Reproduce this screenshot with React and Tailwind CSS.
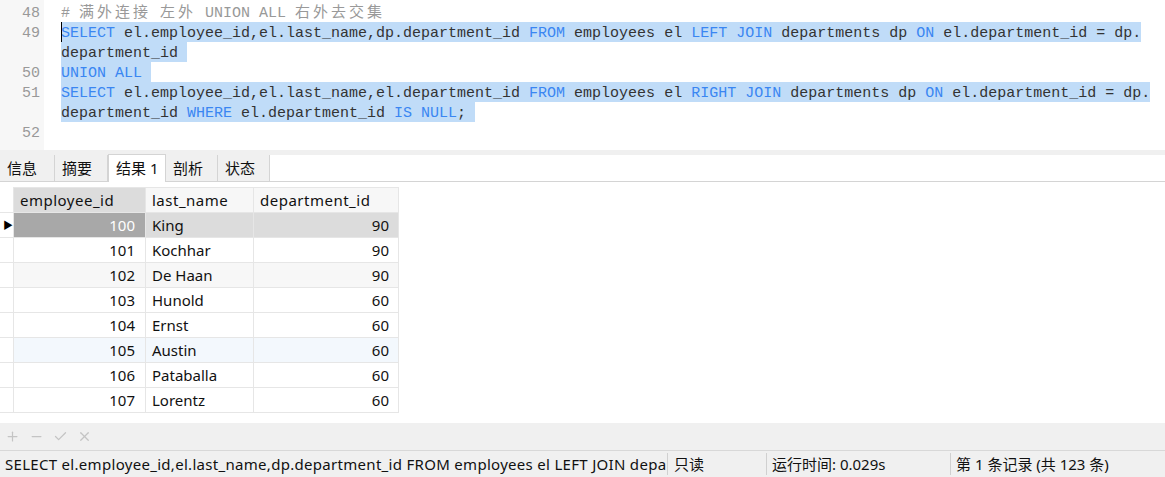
import { Plus, Minus, Check, X } from "lucide-react";

const mono = { fontFamily: '"Liberation Mono", "Noto Sans CJK SC", monospace' };
const ui = { fontFamily: '"Noto Sans", "Noto Sans CJK SC", sans-serif' };

// each visual (wrapped) line of the editor
const editorLines = [
  {
    no: "48",
    parts: [
      { t: "# ", c: "cm" },
      { t: "满外连接", c: "cj" },
      { t: " ", c: "cm" },
      { t: "左外", c: "cj" },
      { t: " UNION ALL ", c: "cm" },
      { t: "右外去交集", c: "cj" },
    ],
  },
  {
    no: "49",
    cursor: true,
    parts: [
      { t: "SELECT", c: "kw" },
      { t: " el.employee_id,el.last_name,dp.department_id " },
      { t: "FROM", c: "kw" },
      { t: " employees el " },
      { t: "LEFT JOIN", c: "kw" },
      { t: " departments dp " },
      { t: "ON", c: "kw" },
      { t: " el.department_id = dp." },
    ],
    sel: true,
  },
  { no: "", parts: [{ t: "department_id " }], sel: true },
  { no: "50", parts: [{ t: "UNION ALL", c: "kw" }, { t: " " }], sel: true },
  {
    no: "51",
    parts: [
      { t: "SELECT", c: "kw" },
      { t: " el.employee_id,el.last_name,el.department_id " },
      { t: "FROM", c: "kw" },
      { t: " employees el " },
      { t: "RIGHT JOIN", c: "kw" },
      { t: " departments dp " },
      { t: "ON", c: "kw" },
      { t: " el.department_id = dp." },
    ],
    sel: true,
  },
  {
    no: "",
    parts: [
      { t: "department_id " },
      { t: "WHERE", c: "kw" },
      { t: " el.department_id " },
      { t: "IS NULL", c: "kw" },
      { t: "; " },
    ],
    sel: true,
  },
  { no: "52", parts: [] },
];

const rows = [
  ["100", "King", "90"],
  ["101", "Kochhar", "90"],
  ["102", "De Haan", "90"],
  ["103", "Hunold", "60"],
  ["104", "Ernst", "60"],
  ["105", "Austin", "60"],
  ["106", "Pataballa", "60"],
  ["107", "Lorentz", "60"],
];

const tabs = ["信息", "摘要", "结果 1", "剖析", "状态"];

function partClass(c) {
  if (c === "kw") return "text-[#3a86f2]";
  if (c === "cm") return "text-[#999]";
  if (c === "cj") return "text-[#999] tracking-[3px]";
  return "";
}

function Editor() {
  return (
    <div className="flex h-[150px] bg-white">
      <div className="w-[44px] bg-[#f7f7f7] pt-[4px]">
        {editorLines.map((l, i) => (
          <div
            key={i}
            className="h-[20px] pr-[4px] text-right text-[15px] leading-[20px] text-[#999]"
            style={mono}
          >
            {l.no}
          </div>
        ))}
      </div>
      <div className="flex-1 pl-[17px] pt-[2px]">
        {editorLines.map((l, i) => (
          <div key={i} className="flex h-[20px] whitespace-pre text-[15px] text-[#333]" style={mono}>
            <span className={`relative leading-[24px] ${l.sel ? "bg-[#c0dcf8]" : ""}`}>
              {l.cursor && (
                <span className="absolute left-0 top-0 h-[20px] w-px bg-black" />
              )}
              {l.parts.map((p, j) => (
                <span key={j} className={partClass(p.c)}>
                  {p.t}
                </span>
              ))}
            </span>
          </div>
        ))}
      </div>
    </div>
  );
}

function Tabs() {
  return (
    <div className="border-t-[5px] border-[#f0f0f0]">
      <div className="flex h-[27px] items-end border-b border-[#d4d4d4] bg-white">
        {tabs.map((t, i) =>
          i === 2 ? (
            <div
              key={t}
              className="-mb-px flex h-[28px] w-[58px] items-center border-x border-t border-[#d4d4d4] bg-white pl-[7px] text-[15px] text-[#111]"
              style={ui}
            >
              {t}
            </div>
          ) : (
            <div
              key={t}
              className={`flex h-[26px] items-center border-r border-[#d4d4d4] bg-[#f0f0f0] pl-[7px] text-[15px] text-[#111] ${
                i === 0 ? "w-[55px]" : i === 1 ? "w-[53px]" : "w-[52px]"
              }`}
              style={ui}
            >
              {t}
            </div>
          )
        )}
      </div>
    </div>
  );
}

function ResultTable() {
  const rowBg = (i) =>
    i === 2 ? "bg-[#f7f7f7]" : i === 5 ? "bg-[#f3f8fd]" : "bg-white";
  return (
    <div className="h-[241px] bg-white pt-[5px]">
      <table className="table-fixed border-collapse text-[15px] text-[#111]" style={ui}>
        <colgroup>
          <col className="w-[13px]" />
          <col className="w-[132px]" />
          <col className="w-[108px]" />
          <col className="w-[145px]" />
        </colgroup>
        <thead>
          <tr className="h-[25px]">
            <th className="border-r border-[#e6e6e6]" />
            <th className="border border-[#e6e6e6] bg-[#dcdcdc] px-[6px] text-left font-normal tracking-[0.5px]">
              employee_id
            </th>
            <th className="border border-[#e6e6e6] bg-[#f7f7f7] px-[6px] text-left font-normal tracking-[0.5px]">
              last_name
            </th>
            <th className="border border-[#e6e6e6] bg-[#f7f7f7] px-[6px] text-left font-normal tracking-[0.5px]">
              department_id
            </th>
          </tr>
        </thead>
        <tbody>
          {rows.map((r, i) => (
            <tr key={r[0]} className="h-[25px]">
              <td className="border-y border-r border-[#e6e6e6] bg-white p-0 text-[10px] leading-none text-black">
                {i === 0 && <span className="pl-[3px]">▶</span>}
              </td>
              <td
                className={`border border-[#e6e6e6] px-[10px] text-right ${
                  i === 0 ? "bg-[#a8a8a8] text-white" : rowBg(i)
                }`}
              >
                {r[0]}
              </td>
              <td
                className={`border border-[#e6e6e6] px-[6px] ${
                  i === 0 ? "bg-[#dcdcdc]" : rowBg(i)
                }`}
              >
                {r[1]}
              </td>
              <td
                className={`border border-[#e6e6e6] px-[9px] text-right ${
                  i === 0 ? "bg-[#dcdcdc]" : rowBg(i)
                }`}
              >
                {r[2]}
              </td>
            </tr>
          ))}
        </tbody>
      </table>
    </div>
  );
}

function Toolbar() {
  return (
    <div className="flex h-[28px] items-center gap-[9px] border-b border-[#d8d8d8] bg-[#f0f0f0] pl-[5px] text-[#c4c4c4]">
      <Plus size={15} strokeWidth={2} />
      <Minus size={15} strokeWidth={2} />
      <Check size={15} strokeWidth={2} />
      <X size={15} strokeWidth={2} />
    </div>
  );
}

function StatusBar() {
  return (
    <div className="flex h-[26px] items-center bg-[#f0f0f0] text-[15px] text-[#111]" style={ui}>
      <div className="w-[668px] overflow-hidden whitespace-nowrap border-r border-[#d0d0d0] pl-[5px] tracking-[0.3px]">
        SELECT el.employee_id,el.last_name,dp.department_id FROM employees el LEFT JOIN depa
      </div>
      <div className="w-[99px] border-r border-[#d0d0d0] pl-[6px]">只读</div>
      <div className="w-[184px] border-r border-[#d0d0d0] pl-[5px]">运行时间: 0.029s</div>
      <div className="flex-1 pl-[5px]">第 1 条记录 (共 123 条)</div>
    </div>
  );
}

export default function App() {
  return (
    <div className="h-[477px] w-[1165px] overflow-hidden bg-white">
      <Editor />
      <Tabs />
      <ResultTable />
      <Toolbar />
      <StatusBar />
    </div>
  );
}
